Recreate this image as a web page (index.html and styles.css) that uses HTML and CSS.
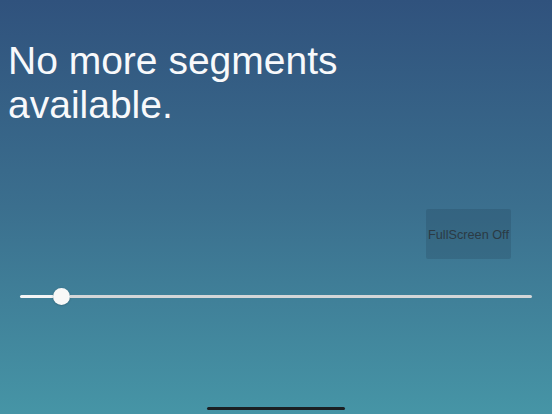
FILE: index.html
```html
<!DOCTYPE html>
<html>
<head>
<meta charset="utf-8">
<link rel="stylesheet" href="styles.css">
</head>
<body>
<div class="screen">
  <h1 class="title">No more segments<br>available.</h1>
  <div class="button-row">
    <div class="fs-button">FullScreen Off</div>
  </div>
  <div class="slider">
    <div class="track-fill"></div>
    <div class="thumb"></div>
    <div class="track-rest"></div>
  </div>
  <div class="home-row">
    <div class="home-indicator"></div>
  </div>
</div>
</body>
</html>
```

FILE: styles.css
```css
html, body {
  margin: 0;
  padding: 0;
}
body {
  width: 552px;
  height: 414px;
  overflow: hidden;
}
.screen {
  width: 552px;
  height: 414px;
  display: flex;
  flex-direction: column;
  background: linear-gradient(to bottom, #30527d 0%, #3b6f8e 50%, #4695a6 100%);
  font-family: "Liberation Sans", Arial, sans-serif;
}
.title {
  margin: 39px 0 0 0;
  padding-left: 8px;
  font-size: 39px;
  font-weight: normal;
  line-height: 44px;
  color: #f8f9fb;
}
.button-row {
  display: flex;
  justify-content: flex-end;
  padding-right: 41px;
  margin-top: 82px;
}
.fs-button {
  width: 85px;
  height: 50px;
  display: flex;
  align-items: center;
  justify-content: center;
  padding-top: 1px;
  box-sizing: border-box;
  background: rgba(20, 40, 55, 0.16);
  border-radius: 2px;
  color: #2b3a44;
  font-size: 12.7px;
  white-space: nowrap;
}
.slider {
  display: flex;
  align-items: center;
  height: 17px;
  margin-top: 29px;
  padding: 0 20px 0 20px;
}
.track-fill {
  width: 33px;
  height: 3px;
  background: #f4f5f6;
  border-radius: 1.5px 0 0 1.5px;
}
.thumb {
  width: 17px;
  height: 17px;
  border-radius: 50%;
  background: #f8f8f8;
  box-shadow: 0 0.5px 2px rgba(0, 0, 0, 0.25);
  flex: none;
}
.track-rest {
  flex: 1;
  height: 3px;
  background: #d3d6d8;
  border-radius: 0 1.5px 1.5px 0;
}
.home-row {
  display: flex;
  justify-content: center;
  margin-top: 102px;
}
.home-indicator {
  width: 138px;
  height: 3px;
  border-radius: 1.5px;
  background: #1b1f22;
}
```
